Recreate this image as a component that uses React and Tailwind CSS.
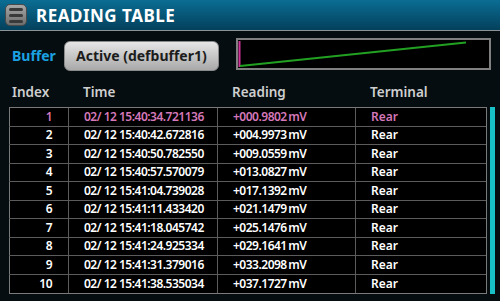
import React from 'react';

const filas = [
  ['1', '02/ 12 15:40:34.721136', '+000.9802', 'Rear'],
  ['2', '02/ 12 15:40:42.672816', '+004.9973', 'Rear'],
  ['3', '02/ 12 15:40:50.782550', '+009.0559', 'Rear'],
  ['4', '02/ 12 15:40:57.570079', '+013.0827', 'Rear'],
  ['5', '02/ 12 15:41:04.739028', '+017.1392', 'Rear'],
  ['6', '02/ 12 15:41:11.433420', '+021.1479', 'Rear'],
  ['7', '02/ 12 15:41:18.045742', '+025.1476', 'Rear'],
  ['8', '02/ 12 15:41:24.925334', '+029.1641', 'Rear'],
  ['9', '02/ 12 15:41:31.379016', '+033.2098', 'Rear'],
  ['10', '02/ 12 15:41:38.535034', '+037.1727', 'Rear'],
];

const cols = 'grid grid-cols-[59px_149px_138px_131px]';

function MenuIcon() {
  return (
    <div className="w-[22px] h-[22px] rounded-[5px] bg-gradient-to-b from-[#a8a8a8] to-[#6e6e6e] border border-[#4a4a4a] flex flex-col items-center justify-center gap-[3px]">
      <span className="block w-[14px] h-[3px] rounded-sm bg-[#3a3a3a]" />
      <span className="block w-[14px] h-[3px] rounded-sm bg-[#3a3a3a]" />
      <span className="block w-[14px] h-[3px] rounded-sm bg-[#3a3a3a]" />
    </div>
  );
}

function Grafico() {
  return (
    <div className="w-[255px] h-[32px] mt-[7px] ml-[17px] border-2 border-[#808080] bg-black">
      <svg width="251" height="28" viewBox="0 0 251 28">
        <line x1="1.5" y1="1" x2="1.5" y2="27" stroke="#d0349a" strokeWidth="2" />
        <line x1="2" y1="26" x2="228" y2="2.5" stroke="#22a022" strokeWidth="2" />
      </svg>
    </div>
  );
}

export default function App() {
  return (
    <div className="w-[500px] h-[301px] overflow-hidden bg-[#060d11] font-['Noto_Sans',sans-serif]">
      {/* Barra de título */}
      <div className="h-[30px] flex items-center pl-[5px] gap-[9px] bg-gradient-to-b from-[#0b6d94] to-[#04415c]">
        <MenuIcon />
        <span className="text-white font-bold text-[17px] tracking-[0.5px] leading-none">READING TABLE</span>
      </div>
      <div className="h-px bg-[#8a9398]" />

      {/* Selector de buffer y gráfico */}
      <div className="h-[53px] flex items-start">
        <span className="text-[#1ba1e2] font-bold text-[14px] ml-[12px] mt-[18px] leading-none">Buffer</span>
        <button className="mt-[10px] ml-[8px] w-[155px] h-[30px] rounded-[6px] bg-gradient-to-b from-[#e6e6e6] to-[#a9a9a9] border border-[#8a8a8a] text-[#1c1c1c] font-bold text-[14px] leading-none whitespace-nowrap">
          Active (defbuffer1)
        </button>
        <Grafico />
      </div>

      {/* Encabezados */}
      <div className={`${cols} h-[17px] ml-[9px] items-center text-[13.5px] font-semibold text-[#cfcfcf] leading-none`}>
        <span className="pl-[3px]">Index</span>
        <span className="pl-[15px]">Time</span>
        <span className="pl-[15px]">Reading</span>
        <span className="pl-[15px]">Terminal</span>
      </div>

      {/* Tabla */}
      <div className="flex mt-[6px] ml-[9px] gap-[3px]">
        <div className="border border-[#7a7a7a] bg-black">
          {filas.map((f, i) => {
            const color = i === 0 ? 'text-[#d578b9]' : 'text-white';
            return (
              <div
                key={i}
                className={`${cols} -ml-px h-[18.5px] items-center text-[12px] tracking-[-0.5px] font-semibold leading-none whitespace-nowrap ${color} ${i < filas.length - 1 ? 'border-b border-[#5c5c5c]' : ''}`}
              >
                <span className="pr-[16px] h-full flex items-center justify-end">{f[0]}</span>
                <span className="pl-[15px] h-full flex items-center border-l border-[#5c5c5c]">{f[1]}</span>
                <span className="pl-[15px] h-full flex items-center border-l border-[#5c5c5c]">{f[2]}{'\u2009'}mV</span>
                <span className="pl-[15px] h-full flex items-center border-l border-[#5c5c5c] tracking-normal">{f[3]}</span>
              </div>
            );
          })}
        </div>
        <div className="w-[5px] bg-[#18c0c8]" />
      </div>
    </div>
  );
}
